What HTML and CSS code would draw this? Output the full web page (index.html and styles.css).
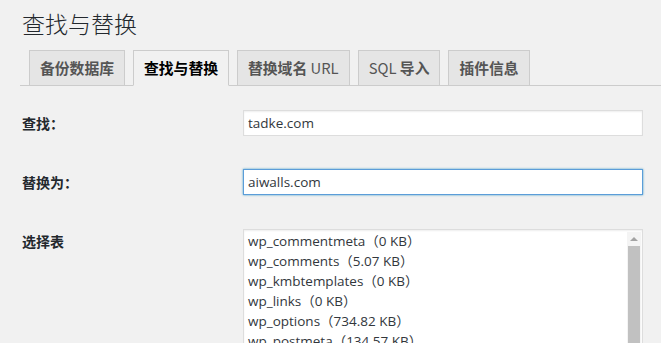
FILE: index.html
```html
<!DOCTYPE html>
<html lang="zh-CN">
<head>
<meta charset="utf-8">
<title>查找与替换</title>
<link rel="stylesheet" href="styles.css">
</head>
<body>
<div class="wrap">
  <h1 class="page-title">查找与替换</h1>
  <nav class="tabs">
    <span class="tab">备份数据库</span>
    <span class="tab active">查找与替换</span>
    <span class="tab">替换域名 <span class="latin">URL</span></span>
    <span class="tab"><span class="latin">SQL</span> 导入</span>
    <span class="tab">插件信息</span>
  </nav>
  <div class="form">
    <label class="label">查找：</label>
    <div class="field"><input class="text" type="text" value="tadke.com"></div>
    <label class="label">替换为：</label>
    <div class="field"><input class="text focus" type="text" value="aiwalls.com"></div>
    <label class="label">选择表</label>
    <div class="field">
      <div class="listbox">
        <ul class="options">
          <li>wp_commentmeta（0 KB）</li>
          <li>wp_comments（5.07 KB）</li>
          <li>wp_kmbtemplates（0 KB）</li>
          <li>wp_links（0 KB）</li>
          <li>wp_options（734.82 KB）</li>
          <li>wp_postmeta（134.57 KB）</li>
          <li>wp_posts（512.00 KB）</li>
          <li>wp_terms（2.05 KB）</li>
        </ul>
        <div class="scrollbar">
          <div class="arrow"></div>
          <div class="thumb"></div>
        </div>
      </div>
    </div>
  </div>
</div>
</body>
</html>
```
FILE: styles.css
```css
html, body {
  margin: 0;
  padding: 0;
  background: #f1f1f1;
  overflow: hidden;
  height: 343px;
}
body {
  font-family: "Noto Sans CJK SC", "Open Sans", sans-serif;
  color: #23282d;
  font-size: 14px;
}
.wrap {
  padding-left: 20px;
}
.page-title {
  margin: 0;
  padding: 9px 0 4px 2px;
  font-size: 23px;
  line-height: 29px;
  font-weight: 300;
  color: #23282d;
}
.tabs {
  margin-top: 8px;
  display: flex;
  border-bottom: 1px solid #ccc;
  padding-left: 9px;
  gap: 8px;
}
.tab {
  display: block;
  padding: 5px 10px;
  line-height: 24px;
  font-size: 14.8px;
  font-weight: 700;
  color: #555;
  background: #e5e5e5;
  border: 1px solid #ccc;
  margin-bottom: -1px;
  white-space: nowrap;
}
.tab .latin {
  font-weight: 400;
}
.tab.active {
  background: #f1f1f1;
  color: #000;
  border-bottom-color: #f1f1f1;
}
.form {
  display: grid;
  grid-template-columns: 223px 400px;
  row-gap: 33px;
  padding-top: 24px;
}
.label {
  font-weight: 700;
  line-height: 26px;
  padding-left: 2px;
  color: #23282d;
}
.field {
  display: flex;
}
.text {
  box-sizing: border-box;
  width: 400px;
  height: 26px;
  margin: 0;
  padding: 0 4px;
  font-family: "Open Sans", "Noto Sans CJK SC", sans-serif;
  font-size: 13.5px;
  color: #32373c;
  background: #fff;
  border: 1px solid #ddd;
  box-shadow: inset 0 1px 2px rgba(0,0,0,.07);
  outline: none;
}
.text.focus {
  border-color: #5b9dd9;
  box-shadow: 0 0 2px rgba(30,140,190,.8);
}
.listbox {
  margin-top: 1px;
  box-sizing: border-box;
  width: 400px;
  height: 220px;
  display: flex;
  background: #fff;
  border: 1px solid #ddd;
  box-shadow: inset 0 1px 2px rgba(0,0,0,.07);
}
.options {
  flex: 1;
  list-style: none;
  margin: 0;
  padding: 1px 0 0 4px;
  font-family: "Open Sans", "Noto Sans CJK SC", sans-serif;
  font-size: 13.5px;
  line-height: 20px;
  color: #32373c;
}
.options li {
  white-space: nowrap;
}
.scrollbar {
  width: 14px;
  margin: 2px 1px 0 0;
  display: flex;
  flex-direction: column;
  align-items: center;
  background: #f4f4f4;
}
.arrow {
  height: 14px;
  width: 14px;
  display: flex;
  align-items: center;
  justify-content: center;
}
.arrow::before {
  content: "";
  border-left: 4px solid transparent;
  border-right: 4px solid transparent;
  border-bottom: 4px solid #a3a3a3;
}
.thumb {
  flex: 1;
  width: 12px;
  background: #c1c1c1;
}
```
